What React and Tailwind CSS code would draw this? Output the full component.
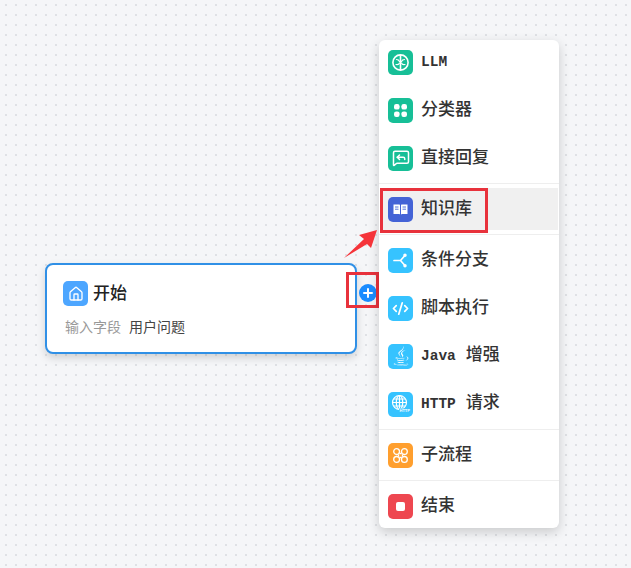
import { Home, MessageSquareReply, CodeXml } from "lucide-react";
import { FaJava } from "react-icons/fa";

const GREEN = "bg-[#17bf97]";
const BLUE = "bg-[#36c3ff]";

function BrainIcon() {
  return (
    <svg width="19" height="19" viewBox="0 0 19 19" fill="none" stroke="white" strokeWidth="1.6" strokeLinecap="round">
      <circle cx="9.5" cy="9.5" r="7.6" />
      <path d="M9.5 2.5v14" />
      <path d="M5.5 6.5c1.5 0 2.5.8 3 2M13.5 6.5c-1.5 0-2.5.8-3 2M5 11.5c1.5.3 3 0 3.5-1.5M14 11.5c-1.5.3-3 0-3.5-1.5" strokeWidth="1.2" />
    </svg>
  );
}

function GridIcon() {
  return (
    <svg width="15" height="15" viewBox="0 0 15 15" fill="white">
      <rect x="1" y="1" width="5.6" height="5.6" rx="2.2" />
      <rect x="8.4" y="1" width="5.6" height="5.6" rx="2.2" />
      <rect x="1" y="8.4" width="5.6" height="5.6" rx="2.2" />
      <rect x="8.4" y="8.4" width="5.6" height="5.6" rx="2.2" />
    </svg>
  );
}

function BookIcon() {
  return (
    <svg width="15" height="13" viewBox="0 0 15 13" fill="white">
      <path d="M0.5 1.5h5.5c.8 0 1 .4 1 1v9.5c0-.5-.4-.9-1-.9H.5z" />
      <path d="M14.5 1.5H9c-.8 0-1 .4-1 1v9.5c0-.5.4-.9 1-.9h5.5z" />
      <path d="M2 4h3.5M2 6.2h3.5M9.5 4H13M9.5 6.2H13" stroke="#4463d6" strokeWidth="0.9" />
    </svg>
  );
}

function BranchIcon() {
  return (
    <svg width="17" height="17" viewBox="0 0 17 17" fill="none" stroke="white" strokeWidth="1.7" strokeLinecap="round">
      <path d="M2 8.5h6.5l4-4.5M8.5 8.5l4 4.5" />
      <circle cx="13" cy="3.2" r="0.9" fill="white" />
      <circle cx="13" cy="13.8" r="0.9" fill="white" />
    </svg>
  );
}

function GlobeIcon() {
  return (
    <svg width="21" height="21" viewBox="0 0 21 21" fill="none" stroke="white" strokeWidth="1.2">
      <circle cx="9.5" cy="8.5" r="7" />
      <ellipse cx="9.5" cy="8.5" rx="3.2" ry="7" />
      <path d="M9.5 1.5v14M2.5 8.5h14M3.5 5h12M3.5 12h12" />
      <rect x="9" y="14.5" width="11.5" height="4" fill="#36c3ff" stroke="none" />
      <text x="9.5" y="18.2" fontSize="4" fontWeight="700" fill="white" stroke="none" fontFamily="Liberation Sans, sans-serif">HTTP</text>
    </svg>
  );
}

function SubflowIcon() {
  return (
    <svg width="17" height="17" viewBox="0 0 17 17" fill="none" stroke="white" strokeWidth="1.3">
      <circle cx="4.6" cy="4.6" r="2.9" />
      <circle cx="12.4" cy="4.6" r="2.9" />
      <circle cx="4.6" cy="12.4" r="2.9" />
      <circle cx="12.4" cy="12.4" r="2.9" />
      <path d="M7.5 6.5h2M7.5 10.5h2M6.5 7.5v2M10.5 7.5v2" />
    </svg>
  );
}

function Item({ color, icon, active, children }) {
  return (
    <div className={`flex h-[42px] items-center gap-2 ${active ? "bg-[#f0f0f0] pl-[7px]" : "pl-2"}`}>
      <div className={`flex h-[25px] w-[25px] items-center justify-center rounded-[5px] text-white ${color}`}>{icon}</div>
      <span className="pb-1 text-[17px] font-medium leading-[22px] text-[#333333]">{children}</span>
    </div>
  );
}

function Latin({ children }) {
  return <span className="font-['Liberation_Mono',monospace] text-[14.5px] font-bold">{children}</span>;
}

export default function App() {
  return (
    <div className="relative h-[568px] w-[631px] overflow-hidden bg-[#f5f6f8] bg-[radial-gradient(#dfe1e5_1px,transparent_1.2px)] bg-size-[10px_10px] bg-position-[1px_0px] font-['Noto_Sans_CJK_SC',sans-serif]">
      {/* start node */}
      <div className="absolute left-[45px] top-[263px] h-[91px] w-[312px] rounded-lg border-2 border-[#3090e6] bg-white pl-4 pt-4 shadow-[0_4px_8px_rgba(0,0,0,0.15)]">
        <div className="flex items-center gap-[5px]">
          <div className="flex h-[25px] w-[25px] items-center justify-center rounded-[5px] bg-[#4da6ff] text-white">
            <Home size={16} />
          </div>
          <span className="pb-1 text-[17px] font-medium leading-[21px] text-[#222222]">开始</span>
        </div>
        <div className="mt-[10px] flex gap-2 pl-0.5 text-[14px] leading-[20px]">
          <span className="text-[#999999]">输入字段</span>
          <span className="text-[#444444]">用户问题</span>
        </div>
      </div>

      {/* add button */}
      <div className="absolute left-[359px] top-[284px] flex h-[18px] w-[18px] items-center justify-center rounded-full bg-[#1a8cff]">
        <svg width="10" height="10" viewBox="0 0 10 10" stroke="white" strokeWidth="2" strokeLinecap="round">
          <path d="M1 5h8M5 1v8" />
        </svg>
      </div>
      <div className="absolute left-[346px] top-[272px] h-[36px] w-[33px] border-[3px] border-[#e8323c]" />

      {/* node menu */}
      <div className="absolute left-[379px] top-[40px] h-[488px] w-[180px] rounded-md bg-white shadow-[0_4px_12px_rgba(0,0,0,0.18)]">
        <div className="flex flex-col gap-[6px] px-px pb-1 pt-px">
          <Item color={GREEN} icon={<BrainIcon />}><Latin>LLM</Latin></Item>
          <Item color={GREEN} icon={<GridIcon />}>分类器</Item>
          <Item color={GREEN} icon={<MessageSquareReply size={18} />}>直接回复</Item>
        </div>
        <div className="border-t border-[#eeeeee] pl-0.5 pr-px py-1">
          <Item color="bg-[#4463d6]" icon={<BookIcon />} active>知识库</Item>
        </div>
        <div className="flex flex-col gap-[6px] border-t border-[#eeeeee] px-px py-1">
          <Item color={BLUE} icon={<BranchIcon />}>条件分支</Item>
          <Item color={BLUE} icon={<CodeXml size={17} strokeWidth={2.4} />}>脚本执行</Item>
          <Item color={BLUE} icon={<FaJava size={20} />}><Latin>Java</Latin><span className="ml-[10px]">增强</span></Item>
          <Item color={BLUE} icon={<GlobeIcon />}><Latin>HTTP</Latin><span className="ml-[10px]">请求</span></Item>
        </div>
        <div className="border-t border-[#eeeeee] px-px py-1">
          <Item color="bg-[#ff9f2e]" icon={<SubflowIcon />}>子流程</Item>
        </div>
        <div className="border-t border-[#eeeeee] px-px pt-1">
          <Item color="bg-[#ee4750]" icon={<div className="h-[9px] w-[9px] rounded-[2px] bg-white" />}>结束</Item>
        </div>
      </div>

      {/* annotations */}
      <div className="absolute left-[380px] top-[188px] h-[45px] w-[108px] border-[3px] border-[#e8323c]" />
      <svg className="absolute left-[340px] top-[225px]" width="42" height="38" viewBox="0 0 42 38" fill="#f5343a">
        <path d="M4 33 L24 14 L19 10 L37 5 L31 23 L27 19 Z" />
      </svg>
    </div>
  );
}
